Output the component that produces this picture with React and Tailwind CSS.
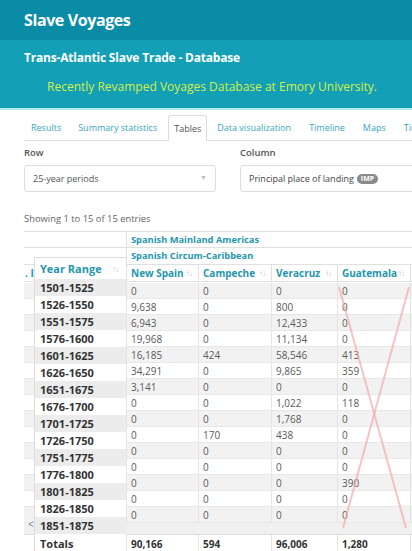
import React from "react";

const rows = [
  ["1501-1525", "0", "0", "0", "0"],
  ["1526-1550", "9,638", "0", "800", "0"],
  ["1551-1575", "6,943", "0", "12,433", "0"],
  ["1576-1600", "19,968", "0", "11,134", "0"],
  ["1601-1625", "16,185", "424", "58,546", "413"],
  ["1626-1650", "34,291", "0", "9,865", "359"],
  ["1651-1675", "3,141", "0", "0", "0"],
  ["1676-1700", "0", "0", "1,022", "118"],
  ["1701-1725", "0", "0", "1,768", "0"],
  ["1726-1750", "0", "170", "438", "0"],
  ["1751-1775", "0", "0", "0", "0"],
  ["1776-1800", "0", "0", "0", "0"],
  ["1801-1825", "0", "0", "0", "390"],
  ["1826-1850", "0", "0", "0", "0"],
  ["1851-1875", "0", "0", "0", "0"],
];

function Sort() {
  return (
    <span className="text-[8px] leading-none text-[#c4c4c4] tracking-[-1px] font-normal">↑↓</span>
  );
}

const colW = ["w-[102px]", "w-[72px]", "w-[73px]", "w-[66px]", "w-[73px]"];

export default function App() {
  return (
    <div
      className="w-[412px] h-[551px] overflow-hidden bg-white relative"
      style={{ fontFamily: '"Open Sans", "Noto Sans", sans-serif' }}
    >
      {/* top bars */}
      <div className="h-[40px] bg-[#0a8ca7] flex items-center pl-6">
        <span className="text-white font-bold text-[16px] tracking-[-0.4px]">Slave Voyages</span>
      </div>
      <div className="h-[68px] bg-[#139fb5] pl-6">
        <div className="pt-[9px] text-white font-bold text-[12px] leading-[18px] tracking-[-0.2px]">
          Trans-Atlantic Slave Trade - Database
        </div>
        <div className="pt-[11px] pl-[23px] text-[#d2f04a] text-[12px] leading-[18px] tracking-[0px]">
          Recently Revamped Voyages Database at Emory University.
        </div>
      </div>
      <div className="h-[2px] bg-[#b6ecf3]"></div>

      {/* tabs */}
      <div className="mt-[5px] ml-6 flex h-[26px] border-b border-[#dddddd] text-[9px] text-[#39a6ba] whitespace-nowrap">
        <div className="px-[7px] flex items-center">Results</div>
        <div className="ml-[2px] px-[8px] flex items-center">Summary statistics</div>
        <div className="ml-[3px] px-[5px] flex items-center border border-b-0 border-[#dddddd] rounded-t-[3px] bg-white text-[#555] -mb-px">Tables</div>
        <div className="ml-[2px] px-[8px] flex items-center">Data visualization</div>
        <div className="ml-[2px] px-[8px] flex items-center">Timeline</div>
        <div className="ml-[2px] px-[8px] flex items-center">Maps</div>
        <div className="ml-[2px] px-[8px] flex items-center">Timelapse</div>
      </div>

      {/* form */}
      <div className="ml-6 mt-[5px] flex">
        <div className="w-[192px] shrink-0">
          <div className="text-[9.5px] font-semibold text-[#555] leading-[14px]">Row</div>
          <div className="mt-[5px] h-[27px] border border-[#dddddd] rounded-[3px] flex items-center justify-between pl-[8px] pr-[8px] text-[9px] text-[#555]">
            <span>25-year periods</span>
            <span className="text-[7px] text-[#c0c0c0]">▼</span>
          </div>
        </div>
        <div className="ml-[24px] w-[200px] shrink-0">
          <div className="text-[9.5px] font-semibold text-[#555] leading-[14px]">Column</div>
          <div className="mt-[5px] h-[27px] border border-[#dddddd] rounded-[3px] flex items-center pl-[8px] text-[9px] text-[#444] whitespace-nowrap">
            <span>Principal place of landing</span>
            <span className="ml-[3px] bg-[#8a8a8a] text-white font-bold text-[7px] leading-[10px] px-[4px] rounded-full">IMP</span>
          </div>
        </div>
      </div>

      <div className="ml-6 mt-[20px] text-[9.4px] text-[#666] leading-[14px]">Showing 1 to 15 of 15 entries</div>

      {/* table */}
      <div className="absolute left-6 top-[231px] w-[400px] text-[10px] leading-none">
        <div className="flex h-[17px] border-t border-b border-[#e0e0e0]">
          <div className={`${colW[0]} shrink-0`}></div>
          <div className="flex-1 border-l border-[#e0e0e0] flex items-center pl-[4px] font-bold text-[9.3px] text-[#2596ac] whitespace-nowrap">Spanish Mainland Americas</div>
        </div>
        <div className="flex h-[17px] border-b border-[#e0e0e0]">
          <div className={`${colW[0]} shrink-0`}></div>
          <div className="flex-1 border-l border-[#e0e0e0] flex items-center pl-[4px] font-bold text-[9.3px] text-[#2596ac] whitespace-nowrap">Spanish Circum-Caribbean</div>
        </div>
        <div className="flex h-[17px] border-b border-[#e0e0e0] font-bold text-[#2596ac]">
          <div className={`${colW[0]} shrink-0 flex items-center pl-[1px]`}>. I</div>
          {["New Spain", "Campeche", "Veracruz", "Guatemala"].map((h, i) => (
            <div key={h} className={`${colW[i + 1]} shrink-0 border-l border-[#e0e0e0] flex items-center justify-between pl-[4px] pr-[6px]`}>
              <span>{h}</span>
              <Sort />
            </div>
          ))}
          <div className="flex-1 border-l border-[#e0e0e0]"></div>
        </div>
        <div className="pt-px">
          {rows.map((r, ri) => (
            <div key={r[0]} className={`flex h-[16px] border-b border-[#e8e8e8] text-[#5a5a5a] ${ri % 2 === 0 ? "bg-[#f2f2f2]" : "bg-white"}`}>
              <div className={`${colW[0]} shrink-0`}></div>
              {r.slice(1).map((v, i) => (
                <div key={i} className={`${colW[i + 1]} shrink-0 border-l border-[#e4e4e4] flex items-center pl-[4px]`}>{v}</div>
              ))}
              <div className="flex-1 border-l border-[#e4e4e4]"></div>
            </div>
          ))}
        </div>
        <div className="h-[11px] bg-[#f0f0f0] flex">
          <div className={`${colW[0]} shrink-0`}></div>
        </div>
        <div className="flex h-[18px] border-t border-[#dddddd] font-bold text-[#333]">
          <div className={`${colW[0]} shrink-0`}></div>
          {["90,166", "594", "96,006", "1,280"].map((v, i) => (
            <div key={i} className={`${colW[i + 1]} shrink-0 border-l border-[#e4e4e4] flex items-center pl-[4px]`}>{v}</div>
          ))}
          <div className="flex-1 border-l border-[#e4e4e4]"></div>
        </div>

        {/* pager arrow behind overlay */}
        <div className="absolute left-[4px] top-[288px] text-[10px] text-[#777]">&lt;</div>

        {/* floating fixed column */}
        <div className="absolute left-[10px] top-[26px] w-[92px] border-t border-l border-[#dddddd] bg-white text-[11px] font-bold text-[#333]">
          <div className="h-[21px] flex items-center justify-between pl-[5px] pr-[8px] text-[#2596ac]">
            <span>Year Range</span>
            <Sort />
          </div>
          {rows.map((r, ri) => (
            <div key={r[0]} className={`h-[17px] flex items-center pl-[5px] ${ri % 2 === 0 ? "bg-[#ececec]" : "bg-white"}`}>{r[0]}</div>
          ))}
          <div className="h-[18px] flex items-center pl-[5px] bg-white">Totals</div>
        </div>
      </div>

      {/* red X mark */}
      <svg className="absolute left-0 top-0 pointer-events-none" width="412" height="551">
        <line x1="339" y1="287" x2="406" y2="528" stroke="#f4a9a9" strokeWidth="2" strokeOpacity="0.7" />
        <line x1="409" y1="287" x2="343" y2="528" stroke="#f4a9a9" strokeWidth="2" strokeOpacity="0.7" />
      </svg>
    </div>
  );
}
